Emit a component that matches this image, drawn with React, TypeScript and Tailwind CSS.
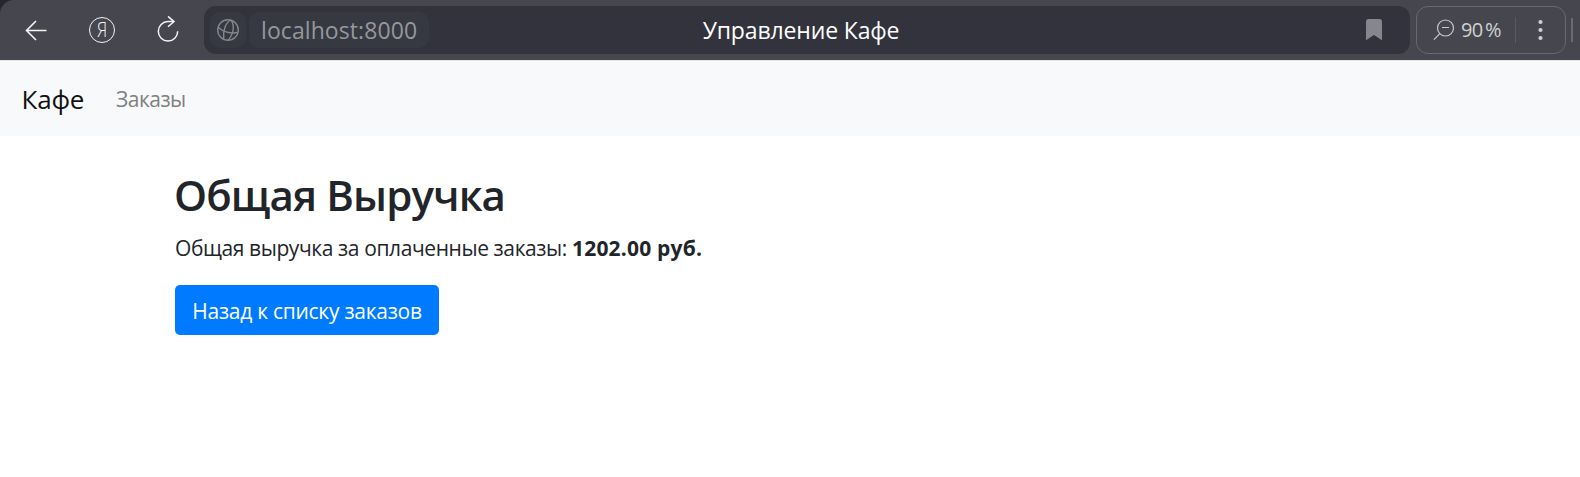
function BackIcon() {
  return (
    <svg className="h-8 w-8" viewBox="0 0 32 32" fill="none" stroke="#f4f4f4" strokeWidth="1.6">
      <path d="M26.500 16.500H6.500M16 7l-9.500 9.500L16 26" />
    </svg>
  );
}

function ReloadIcon() {
  return (
    <svg className="h-8 w-8" viewBox="0 0 32 32" fill="none" stroke="#f4f4f4" strokeWidth="1.5">
      <path d="M22 7.600H16a9.700 9.700 0 1 0 9.700 9.700" />
      <path d="m16 2.400 6 5.200-6 5.200" />
    </svg>
  );
}

function GlobeIcon() {
  return (
    <svg className="h-6 w-6" viewBox="0 0 24 24" fill="none" stroke="#85868c" strokeWidth="1.4">
      <circle cx="12" cy="12" r="10.300" />
      <path d="M14.500 2C9.500 5 6.500 13 7.800 21.300M14.500 2c4.500 4 3.500 14-2.500 20.300" />
      <path d="M2.200 9.200c4.500 4.600 12.300 6.800 19.300 5.300" />
    </svg>
  );
}

function ZoomOutIcon() {
  return (
    <svg className="h-[22px] w-[22px]" viewBox="0 0 22 22" fill="none" stroke="#c9c9cb" strokeWidth="1.2">
      <circle cx="12.500" cy="9" r="8" />
      <path d="M9 8.500h7M6.800 14.700.900 20.600" />
    </svg>
  );
}

export default function App() {
  return (
    <div className="h-[477px] w-full overflow-hidden bg-white font-['Open_Sans',sans-serif]">
      <div className="bg-[#252632]">
        <header className="flex h-[60px] items-center rounded-tl-[14px] bg-[#46464f]">
          <div className="flex w-[204px] shrink-0 items-center pl-5">
            <BackIcon />
            <div className="ml-[37px] flex h-[26px] w-[26px] items-center justify-center rounded-full border border-[#f4f4f4] text-[20px] leading-none font-light text-[#f4f4f4]">
              <span className="scale-x-[0.85]">Я</span>
            </div>
            <div className="ml-[37px]">
              <ReloadIcon />
            </div>
          </div>
          <div className="grid h-12 w-[1206px] shrink-0 grid-cols-[1fr_auto_1fr] items-center rounded-[12px] bg-[#33333d] pr-[18px] pl-[6px]">
            <div className="flex items-center gap-[3px]">
              <div className="flex h-9 w-9 items-center justify-center rounded-[10px] bg-[#363842]">
                <GlobeIcon />
              </div>
              <div className="flex h-9 w-[180px] items-center rounded-[10px] bg-[#363842] pt-px pl-[12px] text-[23px] tracking-[0.080px] whitespace-nowrap text-[#96979b]">
                <span>localhost:8000</span>
              </div>
            </div>
            <div className="text-[23px] tracking-[-0.14px] whitespace-nowrap text-white">Управление Кафе</div>
            <svg className="mr-[10px] h-[22px] w-4 justify-self-end" viewBox="0 0 16 22" fill="#87868d">
              <path d="M2.500 0h11A2.500 2.500 0 0 1 16 2.500V21.200L8 16 0 21.200V2.500A2.500 2.500 0 0 1 2.500 0Z" />
            </svg>
          </div>
          <div className="ml-[6px] flex h-12 w-[150px] shrink-0 items-center rounded-[12px] border border-[#686871] pl-4">
            <ZoomOutIcon />
            <span className="ml-[6px] w-[42px] text-[20px] tracking-[-0.6px] [word-spacing:-2.300px] whitespace-nowrap text-[#d0d0d1]">90 %</span>
            <span className="ml-[12px] h-[26px] w-px bg-[#595961]" />
            <svg className="ml-[22px] h-[22px] w-[5px]" viewBox="0 0 5 22" fill="#cfcfd0">
              <circle cx="2.500" cy="3" r="2.100" />
              <circle cx="2.500" cy="11" r="2.100" />
              <circle cx="2.500" cy="19" r="2.100" />
            </svg>
          </div>
          <span className="ml-[5px] h-6 w-[2px] bg-[#6b6b73]" />
        </header>
      </div>
      <nav className="flex h-[76px] items-center border-t border-[#e4e5e8] bg-[#f8f9fa] pt-[2px] pl-[21.500px]">
        <a className="w-[94.500px] text-[26px] tracking-[-0.2px] text-[#111111]">Кафе</a>
        <a className="text-[21px] tracking-[-0.5px] text-[#808080]">Заказы</a>
      </nav>
      <main className="pt-[33px] pl-[175px] text-[#212529]">
        <h2 className="-ml-px text-[42px] leading-[52px] font-semibold tracking-[-0.880px] whitespace-nowrap">
          <span>Общая Выручка</span>
        </h2>
        <p className="mt-[11px] text-[21px] leading-8 whitespace-nowrap">
          <span className="tracking-[-0.4px]">Общая выручка за оплаченные заказы: </span>
          <strong className="font-bold tracking-[0.2px]">1202.00 руб.</strong>
        </p>
        <button className="mt-[21px] flex h-[50px] w-[264px] items-center justify-center rounded-[5px] bg-[#007bff] pt-[3px] text-[21px] tracking-[-0.27px] whitespace-nowrap text-white">
          <span>Назад к списку заказов</span>
        </button>
      </main>
    </div>
  );
}
